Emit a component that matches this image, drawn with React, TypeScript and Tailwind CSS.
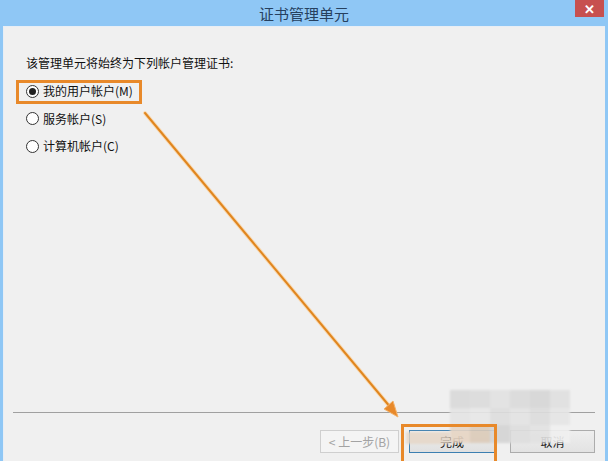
import React from "react";

const font = { fontFamily: '"Noto Sans CJK SC", "Microsoft YaHei", sans-serif' };

function Radio({ checked, label }: { checked?: boolean; label: string }) {
  return (
    <div className="flex items-center h-[16px] gap-[4px]">
      <div className="w-[13px] h-[13px] rounded-full border border-[#333] bg-white flex items-center justify-center">
        {checked && <div className="w-[7px] h-[7px] rounded-full bg-[#222]" />}
      </div>
      <span className="text-[12px] leading-[16px] text-[#111]">{label}</span>
    </div>
  );
}

export default function App() {
  return (
    <div className="relative w-[608px] h-[461px] bg-[#8fc7f5] flex flex-col overflow-hidden" style={font}>
      <div className="relative h-[26px] flex items-center justify-center">
        <span className="text-[15px] text-[#26405e] leading-none pt-[1px]">证书管理单元</span>
        <div className="absolute right-[4px] top-0 w-[29px] h-[17px] bg-[#c7504f] flex items-center justify-center text-white text-[13px] font-bold leading-none">
          ✕
        </div>
      </div>
      <div className="flex-1 ml-[3px] mr-[3px] bg-[#f0f0f0] border-l border-t border-[#e8eef5] flex flex-col">
        <div className="flex-1 pl-[22px] pt-[28px] flex flex-col">
          <div className="text-[12px] leading-[16px] text-[#111]">该管理单元将始终为下列帐户管理证书:</div>
          <div className="mt-[12px] flex flex-col gap-[11.5px]">
            <Radio checked label="我的用户帐户(M)" />
            <Radio label="服务帐户(S)" />
            <Radio label="计算机帐户(C)" />
          </div>
        </div>
        <div className="ml-[9px] mr-[10px] h-[1px] bg-[#a0a0a0]" />
        <div className="flex justify-end gap-[10px] mr-[10px] mt-[17px] mb-[8px] text-[12px]">
          <div className="w-[79px] h-[23px] border border-[#cfcfcf] bg-[#f4f4f4] flex items-center justify-center text-[#a3a3a3]">
            &lt; 上一步(B)
          </div>
          <div className="w-[86px] h-[23px] border border-[#3c7fb1] bg-gradient-to-b from-[#eeeeee] to-[#e0e0e0] flex items-center justify-center text-[#111]">
            完成
          </div>
          <div className="ml-[5px] w-[85px] h-[23px] border border-[#acacac] bg-gradient-to-b from-[#eeeeee] to-[#e3e3e3] flex items-center justify-center text-[#111]">
            取消
          </div>
        </div>
      </div>

      {/* blurred watermark */}
      <div className="absolute left-[450px] top-[390px] w-[120px] h-[53px] grid grid-cols-6 grid-rows-3 blur-[1px] opacity-90">
        <div className="bg-[#d9d9d9]" />
        <div className="bg-[#dcdcdc]" />
        <div className="bg-[#e2e2e2]" />
        <div className="bg-[#dadada]" />
        <div className="bg-[#d6d6d6]" />
        <div className="bg-[#e0e0e0]" />
        <div className="bg-[#e4e4e4]" />
        <div className="bg-[#e8e8e8]" />
        <div className="bg-[#dedede]" />
        <div className="bg-[#e3e3e3]" />
        <div className="bg-[#dddddd]" />
        <div className="bg-[#e6e6e6]" />
        <div className="bg-[#e7d5c4]" />
        <div className="bg-[#dccbb9]" />
        <div className="bg-[#d4d4d4]" />
        <div className="bg-[#dedede]" />
        <div className="bg-[#e2e2e2]" />
        <div className="bg-[#f0f0f0]" />
      </div>
      <div className="absolute left-[406px] top-[432px] w-[44px] h-[12px] bg-[#e6d6c6] blur-[1px] opacity-80" />

      {/* annotation boxes */}
      <div className="absolute left-[16px] top-[80px] w-[126px] h-[24px] border-[3px] border-[#e8892a]" />
      <div className="absolute left-[401px] top-[424px] w-[96px] h-[44px] border-[3px] border-[#e8892a]" />

      {/* arrow */}
      <svg className="absolute left-0 top-0" width="608" height="461" viewBox="0 0 608 461">
        <line x1="145" y1="113" x2="391" y2="408" stroke="#f8d8b0" strokeWidth="4" strokeLinecap="round" />
        <line x1="145" y1="113" x2="391" y2="408" stroke="#e0861f" strokeWidth="2" strokeLinecap="round" />
        <polygon points="398,417 384,409 393,401" fill="#e8892a" stroke="#f3b26a" strokeWidth="1" />
      </svg>
    </div>
  );
}
